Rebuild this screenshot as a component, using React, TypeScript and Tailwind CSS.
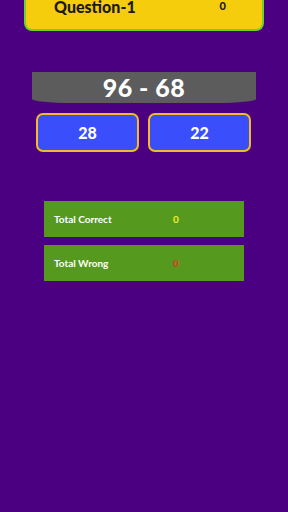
import React from "react";

export default function App() {
  const font = { fontFamily: "Lato, 'Open Sans', sans-serif" };
  return (
    <div className="w-[288px] h-[512px] bg-[#4b0082] flex flex-col overflow-hidden" style={font}>
      <div className="mx-[24px] h-[32px] bg-[#f6cd0c] border-2 border-t-0 border-[#6fd22a] rounded-b-[8px] flex items-start pl-[28px] pr-[36px] -mt-[1px]">
        <span className="text-[16px] leading-[16px] font-black text-[#1c1a10] mt-[0px]">Question-1</span>
        <span className="ml-auto text-[11px] leading-[11px] font-black text-[#1c1a10] mt-[1px]">0</span>
      </div>

      <div className="mx-[32px] mt-[41px] h-[31px] bg-[#5c5c5c] rounded-bl-[40px_4px] rounded-br-[40px_4px] flex items-center justify-center">
        <span className="text-[25px] leading-[25px] font-black text-white tracking-[0.5px]">96 - 68</span>
      </div>

      <div className="mx-[36px] mt-[10px] flex gap-[9px]">
        <div className="w-[103px] h-[39px] bg-[#3a4ffb] border-2 border-[#f7b928] rounded-[7px] flex items-center justify-center">
          <span className="text-[16px] font-black text-white">28</span>
        </div>
        <div className="w-[103px] h-[39px] bg-[#3a4ffb] border-2 border-[#f7b928] rounded-[7px] flex items-center justify-center">
          <span className="text-[16px] font-black text-white">22</span>
        </div>
      </div>

      <div className="mx-[44px] mt-[49px] flex flex-col gap-[8px]">
        <div className="h-[36px] bg-[#559a1e] flex items-center pl-[10px]">
          <span className="w-[119px] text-[10px] font-bold text-white">Total Correct</span>
          <span className="text-[10px] font-bold text-[#f2f224]">0</span>
        </div>
        <div className="h-[36px] bg-[#559a1e] flex items-center pl-[10px]">
          <span className="w-[119px] text-[10px] font-bold text-white">Total Wrong</span>
          <span className="text-[10px] font-bold text-[#e8322a]">0</span>
        </div>
      </div>
    </div>
  );
}
